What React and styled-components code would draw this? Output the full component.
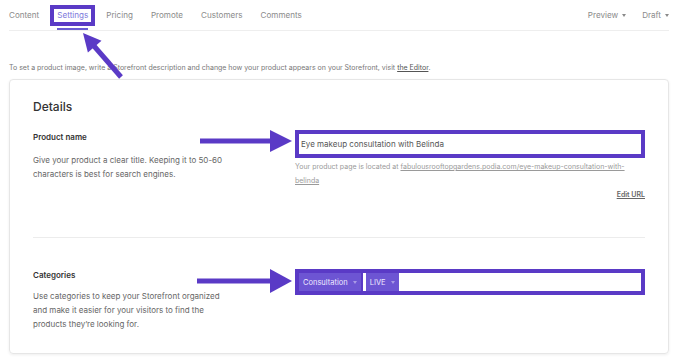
import React from "react";
import styled, { createGlobalStyle } from "styled-components";

const PURPLE = "#5a3ac6";

const Global = createGlobalStyle`
  html, body { margin: 0; padding: 0; background: #fff; }
  body { font-family: Inter, "Noto Sans", sans-serif; color: #333; -webkit-font-smoothing: antialiased; }
  * { box-sizing: border-box; }
`;

const Page = styled.div`
  position: relative;
  width: 679px;
  height: 363px;
  overflow: hidden;
`;

const Nav = styled.nav`
  display: flex;
  align-items: stretch;
  height: 31px;
  margin: 0 10px 0 9px;
  border-bottom: 1px solid #eeeeee;
`;

const Tabs = styled.div`
  display: flex;
  gap: 18px;
  flex: 1;
`;

const Tab = styled.a`
  position: relative;
  display: flex;
  align-items: center;
  font-size: 8.1px;
  color: ${(p) => (p.$active ? "#7d78dc" : "#8a8a8a")};
  text-decoration: none;
  &::after {
    content: "";
    display: ${(p) => (p.$active ? "block" : "none")};
    position: absolute;
    left: 0;
    right: 0;
    bottom: 0;
    height: 2px;
    background: #6a5cd2;
  }
`;

const Highlight = styled.span`
  position: absolute;
  left: -7px;
  right: -7px;
  top: 5px;
  height: 21px;
  border: 4px solid ${PURPLE};
`;

const Menus = styled.div`
  display: flex;
  gap: 16px;
`;

const Menu = styled.a`
  display: flex;
  align-items: center;
  gap: 4px;
  font-size: 8.1px;
  color: #8a8a8a;
`;

const Caret = styled.span`
  display: inline-block;
  width: 0;
  height: 0;
  border-left: 2.5px solid transparent;
  border-right: 2.5px solid transparent;
  border-top: 3px solid ${(p) => p.$color || "#8a8a8a"};
  margin-top: 1px;
`;

const Info = styled.p`
  margin: 32px 0 0 9px;
  font-size: 7px;
  line-height: 10px;
  color: #777;
  a { color: #555; text-decoration: underline; }
`;

const Card = styled.section`
  margin: 6px 10px 0 9px;
  border: 1px solid #e6e6e6;
  border-radius: 4px;
  box-shadow: 0 1px 3px rgba(0, 0, 0, 0.07);
  padding: 19px 23px 22px 23px;
`;

const Heading = styled.h2`
  margin: 0 0 15px;
  font-size: 12px;
  line-height: 16px;
  font-weight: 500;
  color: #333;
`;

const Row = styled.div`
  display: grid;
  grid-template-columns: 1fr 350px;
  column-gap: 20px;
`;

const Divider = styled.hr`
  border: 0;
  border-top: 1px solid #ececec;
  margin: ${(p) => p.$margin};
`;

const Label = styled.h3`
  margin: ${(p) => p.$offset || 0}px 0 0;
  font-size: 8px;
  line-height: 12px;
  font-weight: 600;
  color: #333;
`;

const Desc = styled.p`
  margin: ${(p) => p.$gap || 9}px 0 0;
  max-width: 200px;
  font-size: 8px;
  line-height: 14px;
  color: #666;
`;

const Frame = styled.div`
  display: flex;
  align-items: stretch;
  height: ${(p) => p.$height}px;
  border: 4px solid ${PURPLE};
  background: ${PURPLE};
`;

const TextInput = styled.div`
  flex: 1;
  display: flex;
  align-items: center;
  padding-left: 2px;
  background: #fff;
  font-size: 8px;
  color: #555;
`;

const Help = styled.p`
  margin: 2px 0 0;
  font-size: 7px;
  line-height: 14px;
  color: #9a9a9a;
  a { color: #9a9a9a; text-decoration: underline; }
`;

const EditLink = styled.a`
  display: block;
  text-align: right;
  font-size: 7px;
  line-height: 14px;
  font-weight: 600;
  color: #666;
  text-decoration: underline;
`;

const Tag = styled.span`
  display: flex;
  align-items: center;
  gap: 5px;
  padding: 0 4px;
  margin-right: ${(p) => p.$mr || 0}px;
  background: #6d55d3;
  color: #efeaff;
  font-size: 7.5px;
`;

const Cursor = styled.span`
  width: 3px;
  background: #fff;
`;

const Overlay = styled.svg`
  position: absolute;
  left: 0;
  top: 0;
  pointer-events: none;
`;

export default function App() {
  return (
    <Page>
      <Global />
      <Nav>
        <Tabs>
          <Tab>Content</Tab>
          <Tab $active>
            Settings
            <Highlight />
          </Tab>
          <Tab>Pricing</Tab>
          <Tab>Promote</Tab>
          <Tab>Customers</Tab>
          <Tab>Comments</Tab>
        </Tabs>
        <Menus>
          <Menu>
            Preview <Caret />
          </Menu>
          <Menu>
            Draft <Caret />
          </Menu>
        </Menus>
      </Nav>
      <Info>
        To set a product image, write a Storefront description and change how your product appears on your Storefront, visit <a>the Editor</a>.
      </Info>
      <Card>
        <Heading>Details</Heading>
        <Row>
          <div>
            <Label $offset={1}>Product name</Label>
            <Desc $gap={10}>Give your product a clear title. Keeping it to 50-60 characters is best for search engines.</Desc>
          </div>
          <div>
            <Frame $height={28}>
              <TextInput>Eye makeup consultation with Belinda</TextInput>
            </Frame>
            <Help>
              Your product page is located at <a>fabulousrooftopgardens.podia.com/eye-makeup-consultation-with-belinda</a>
            </Help>
            <EditLink>Edit URL</EditLink>
          </div>
        </Row>
        <Divider $margin="35px 0 31px" />
        <Row>
          <div>
            <Label>Categories</Label>
            <Desc $gap={8}>Use categories to keep your Storefront organized and make it easier for your visitors to find the products they’re looking for.</Desc>
          </div>
          <div>
            <Frame $height={26}>
              <Tag $mr={2}>
                Consultation <Caret $color="#a99ae6" />
              </Tag>
              <Cursor />
              <Tag>
                LIVE <Caret $color="#a99ae6" />
              </Tag>
              <TextInput />
            </Frame>
          </div>
        </Row>
      </Card>
      <Overlay width="679" height="363" viewBox="0 0 679 363">
        <g fill={PURPLE} stroke={PURPLE}>
          <line x1="121" y1="77" x2="94" y2="46" strokeWidth="5" />
          <polygon points="83,33 101.5,40.7 87.9,52.5" stroke="none" />
          <line x1="200" y1="141" x2="272" y2="141" strokeWidth="5" />
          <polygon points="270,130 270,152 292,141" stroke="none" />
          <line x1="197" y1="281" x2="272" y2="281" strokeWidth="5" />
          <polygon points="270,269 270,293 292,281" stroke="none" />
        </g>
      </Overlay>
    </Page>
  );
}
